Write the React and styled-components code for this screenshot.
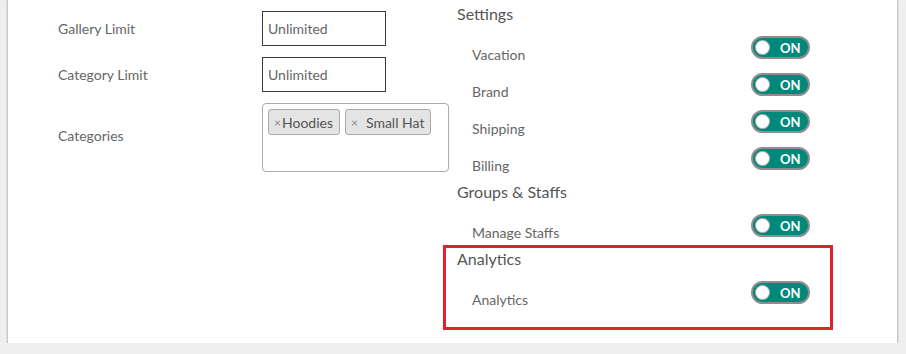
import React from "react";
import styled, { createGlobalStyle } from "styled-components";

const GlobalStyle = createGlobalStyle`
  body {
    margin: 0;
    background: #efefef;
    font-family: "Source Sans Pro", Lato, "Liberation Sans", sans-serif;
  }
`;

const Card = styled.div`
  margin-left: 7px;
  width: 891px;
  height: 343px;
  box-sizing: border-box;
  background: #fff;
  border-left: 1px solid #c8c8c8;
  border-right: 1px solid #c8c8c8;
  box-shadow: 0 1px 1px #8a8a8a;
  display: flex;
`;

const LeftCol = styled.div`
  width: 435px;
  padding: 11px 0 0 50px;
  box-sizing: border-box;
  display: grid;
  grid-template-columns: 204px 1fr;
  grid-auto-rows: min-content;
  row-gap: 11px;
  align-items: center;
`;

const Label = styled.div`
  font-size: 14px;
  color: #666;
  line-height: 20px;
  margin-bottom: ${(p) => p.$lift || 0}px;
`;

const TextInput = styled.div`
  width: 124px;
  height: 35px;
  box-sizing: border-box;
  border: 1px solid #3a3a3a;
  padding: 0 5px;
  display: flex;
  align-items: center;
  font-size: 14px;
  color: #666;
`;

const TagBox = styled.div`
  width: 187px;
  height: 69px;
  box-sizing: border-box;
  border: 1px solid #aaa;
  border-radius: 4px;
  padding: 5px;
  display: flex;
  align-items: flex-start;
  gap: 5px;
`;

const Tag = styled.div`
  height: 26px;
  box-sizing: border-box;
  background: #e4e4e4;
  border: 1px solid #aaa;
  border-radius: 3px;
  padding: 0 6px 0 5px;
  display: flex;
  align-items: center;
  font-size: 14px;
  color: #555;
`;

const Remove = styled.span`
  font-size: 12px;
  color: #888;
  margin-right: ${(p) => p.$gap}px;
`;

const RightCol = styled.div`
  width: 390px;
  display: flex;
  flex-direction: column;
`;

const Section = styled.div`
  display: flex;
  flex-direction: column;
  border: 3px solid ${(p) => (p.$highlight ? "#e3212b" : "transparent")};
  padding: ${(p) => (p.$highlight ? "1px 20px 18px 11px" : "1px 20px 0 11px")};
`;

const Heading = styled.div`
  font-size: 16px;
  line-height: 20px;
  color: #555;
  margin-bottom: 3px;
`;

const Row = styled.div`
  display: flex;
  justify-content: space-between;
  align-items: flex-start;
  padding-left: 15px;
  margin-top: 9px;
`;

const RowLabel = styled.div`
  font-size: 14px;
  line-height: 19px;
  color: #666;
  margin-top: 9px;
`;

const Toggle = styled.div`
  width: 59px;
  height: 23px;
  box-sizing: border-box;
  border: 2px solid #8e8e8e;
  border-radius: 12px;
  background: #00897a;
  display: flex;
  align-items: center;
  padding-left: 3px;
`;

const Knob = styled.div`
  width: 13px;
  height: 13px;
  border-radius: 50%;
  background: #fff;
  box-shadow: 0 0 0 1px #b9b9b9;
`;

const ToggleText = styled.span`
  margin-left: 11px;
  font-size: 13px;
  font-weight: 700;
  color: #fff;
`;

const Switch = () => (
  <Toggle>
    <Knob />
    <ToggleText>ON</ToggleText>
  </Toggle>
);

const sections = [
  { title: "Settings", items: ["Vacation", "Brand", "Shipping", "Billing"] },
  { title: "Groups & Staffs", items: ["Manage Staffs"] },
  { title: "Analytics", items: ["Analytics"], highlight: true },
];

const App = () => (
  <>
    <GlobalStyle />
    <Card>
      <LeftCol>
        <Label>Gallery Limit</Label>
        <TextInput>Unlimited</TextInput>
        <Label>Category Limit</Label>
        <TextInput>Unlimited</TextInput>
        <Label $lift={3}>Categories</Label>
        <TagBox>
          <Tag>
            <Remove $gap={1}>×</Remove>Hoodies
          </Tag>
          <Tag>
            <Remove $gap={8}>×</Remove>Small Hat
          </Tag>
        </TagBox>
      </LeftCol>
      <RightCol>
        {sections.map((s) => (
          <Section key={s.title} $highlight={s.highlight}>
            <Heading>{s.title}</Heading>
            {s.items.map((item) => (
              <Row key={item}>
                <RowLabel>{item}</RowLabel>
                <Switch />
              </Row>
            ))}
          </Section>
        ))}
      </RightCol>
    </Card>
  </>
);

export default App;
